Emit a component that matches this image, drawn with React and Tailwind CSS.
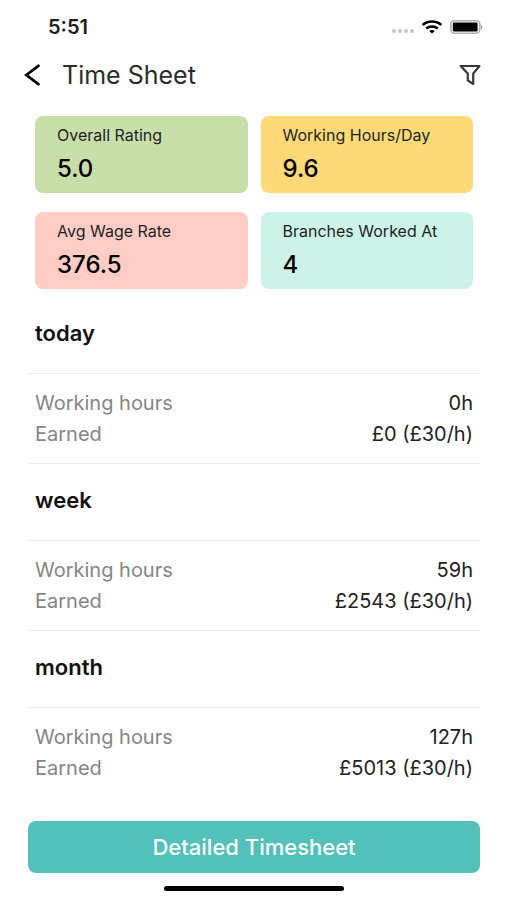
const STATS = [
  { label: 'Overall Rating', value: '5.0', color: 'bg-[#c8dea9]' },
  { label: 'Working Hours/Day', value: '9.6', color: 'bg-[#fed977]' },
  { label: 'Avg Wage Rate', value: '376.5', color: 'bg-[#ffcdc6]' },
  { label: 'Branches Worked At', value: '4', color: 'bg-[#cdf3e9]' },
]

const PERIODS = [
  { name: 'today', hours: '0h', earned: '£0 (£30/h)' },
  { name: 'week', hours: '59h', earned: '£2543 (£30/h)' },
  { name: 'month', hours: '127h', earned: '£5013 (£30/h)' },
]

const StatusBar = () => (
  <div className="flex h-[54px] items-center justify-between pl-12 pr-6">
    <span className="text-xl font-semibold text-[#1c1c1c]">5:51</span>
    <div className="flex items-center gap-2">
      <svg width="22" height="4" viewBox="0 0 22 4" fill="#c4c4c4" className="mt-2">
        <circle cx="2" cy="2" r="2" />
        <circle cx="8" cy="2" r="2" />
        <circle cx="14" cy="2" r="2" />
        <circle cx="20" cy="2" r="2" />
      </svg>
      <svg width="20" height="14" viewBox="0 0 20 14" fill="none" stroke="#000" strokeWidth="2.6">
        <path d="M0.8 5 C5.5 0.4 14.5 0.4 19.2 5" />
        <path d="M4.2 8.6 C7.2 5.8 12.8 5.8 15.8 8.6" />
        <path d="M7.2 11 C8.6 9.6 11.4 9.6 12.8 11 L10 13.6 Z" fill="#000" stroke="none" />
      </svg>
      <svg width="33" height="14" viewBox="0 0 33 14">
        <rect x="0.8" y="0.8" width="29" height="12.4" rx="3.4" fill="#fff" stroke="#b0b0b0" strokeWidth="1.6" />
        <rect x="2.8" y="2.6" width="24.8" height="8.8" rx="1.2" fill="#000" />
        <path d="M31 5 C32.8 5.6 32.8 8.4 31 9 Z" fill="#8f8f8f" />
      </svg>
    </div>
  </div>
)

const Header = () => (
  <header className="flex h-[42px] items-center px-6">
    <button type="button" aria-label="Back" className="mr-[22px]">
      <svg width="16" height="22" viewBox="0 0 16 22" fill="none" stroke="#000" strokeWidth="2.8">
        <path d="M14.4 1.8 L2.4 11 L14.4 20.2" strokeLinecap="round" />
      </svg>
    </button>
    <h1 className="flex-1 text-[25px] leading-8 text-[#2b2b2b]">Time Sheet</h1>
    <button type="button" aria-label="Filter">
      <svg width="24" height="22" viewBox="0 0 24 22" fill="none" stroke="#383838" strokeWidth="2.2" strokeLinejoin="round">
        <path d="M1.6 2 H20.4 L14.2 9.6 V20 L8.8 16.4 V9.6 Z" />
      </svg>
    </button>
  </header>
)

const StatCard = ({ label, value, color }) => (
  <div className={`h-[77px] rounded-lg px-[22px] pt-2 ${color}`}>
    <p className="whitespace-nowrap text-base leading-[22px] text-[#1f1f1f]">{label}</p>
    <p className="mt-2 text-2xl font-medium leading-[30px] text-black">{value}</p>
  </div>
)

const Row = ({ label, value }) => (
  <div className="flex h-[31px] items-center justify-between">
    <dt className="text-[#858585]">{label}</dt>
    <dd className="text-[#222222]">{value}</dd>
  </div>
)

const Period = ({ name, hours, earned }) => (
  <section className="border-b border-[#ececec] last:border-b-0">
    <h2 className="h-[77px] border-b border-[#ececec] px-[7px] pt-[23px] text-[22px] font-semibold leading-[26px] text-[#111111]">
      {name}
    </h2>
    <dl className="px-[7px] pb-[14px] pt-[13px] text-xl">
      <Row label="Working hours" value={hours} />
      <Row label="Earned" value={earned} />
    </dl>
  </section>
)

export default function App() {
  return (
    <div className="flex min-h-screen flex-col bg-white font-['Inter',sans-serif]">
      <StatusBar />
      <Header />
      <main className="flex flex-1 flex-col pl-7 pr-[27px] pt-5">
        <div className="grid grid-cols-2 gap-x-[13px] gap-y-[19px] px-[7px]">
          {STATS.map(s => (
            <StatCard key={s.label} {...s} />
          ))}
        </div>
        <div className="mt-2">
          {PERIODS.map(p => (
            <Period key={p.name} {...p} />
          ))}
        </div>
        <button
          type="button"
          className="mt-auto h-[52px] w-full rounded-lg bg-[#52c1ba] text-[22px] font-medium text-white"
        >
          Detailed Timesheet
        </button>
      </main>
      {/* Home indicator */}
      <div className="flex h-[27px] justify-center pt-[13px]">
        <div className="h-[5px] w-[180px] rounded-full bg-black" />
      </div>
    </div>
  )
}
